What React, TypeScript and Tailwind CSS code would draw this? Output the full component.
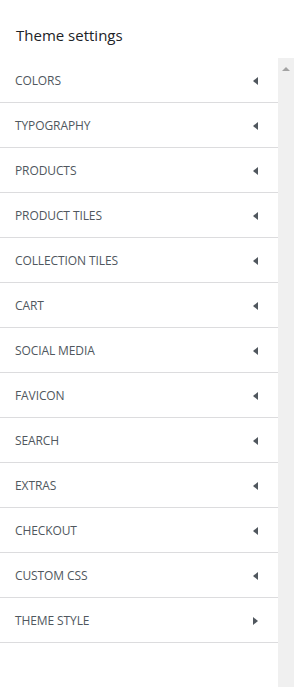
import React from 'react';

const sections = [
  'COLORS',
  'TYPOGRAPHY',
  'PRODUCTS',
  'PRODUCT TILES',
  'COLLECTION TILES',
  'CART',
  'SOCIAL MEDIA',
  'FAVICON',
  'SEARCH',
  'EXTRAS',
  'CHECKOUT',
  'CUSTOM CSS',
  'THEME STYLE',
];

const Caret: React.FC<{ open?: boolean }> = ({ open }) => (
  <svg width="5" height="8" viewBox="0 0 5 8" className="text-[#50575e]">
    {open ? (
      <path d="M0 0 L5 4 L0 8 Z" fill="currentColor" />
    ) : (
      <path d="M5 0 L0 4 L5 8 Z" fill="currentColor" />
    )}
  </svg>
);

const App: React.FC = () => {
  return (
    <div
      className="w-[294px] h-[687px] bg-white flex flex-col overflow-hidden"
      style={{ fontFamily: '"Open Sans", "Noto Sans", sans-serif' }}
    >
      {/* Header */}
      <div className="h-[58px] flex items-center px-[16px] pt-[12px] shrink-0">
        <h1 className="text-[15px] text-[#1d2327] font-medium">Theme settings</h1>
      </div>

      <div className="flex flex-1 min-h-0">
        {/* Section list */}
        <div className="flex-1">
          {sections.map((name) => (
            <div
              key={name}
              className="h-[45px] flex items-center justify-between pl-[15px] pr-[20px] pt-[2px] border-b border-[#dcdcde]"
            >
              <span className="text-[12px] text-[#50575e] tracking-[-0.1px]">{name}</span>
              <Caret open={name === 'THEME STYLE'} />
            </div>
          ))}
        </div>

        {/* Scrollbar */}
        <div className="w-[16px] bg-[#f0f0f0] flex justify-center pt-[9px]">
          <svg width="8" height="4" viewBox="0 0 8 4">
            <path d="M0 4 L4 0 L8 4 Z" fill="#a3a3a3" />
          </svg>
        </div>
      </div>
    </div>
  );
};

export default App;
